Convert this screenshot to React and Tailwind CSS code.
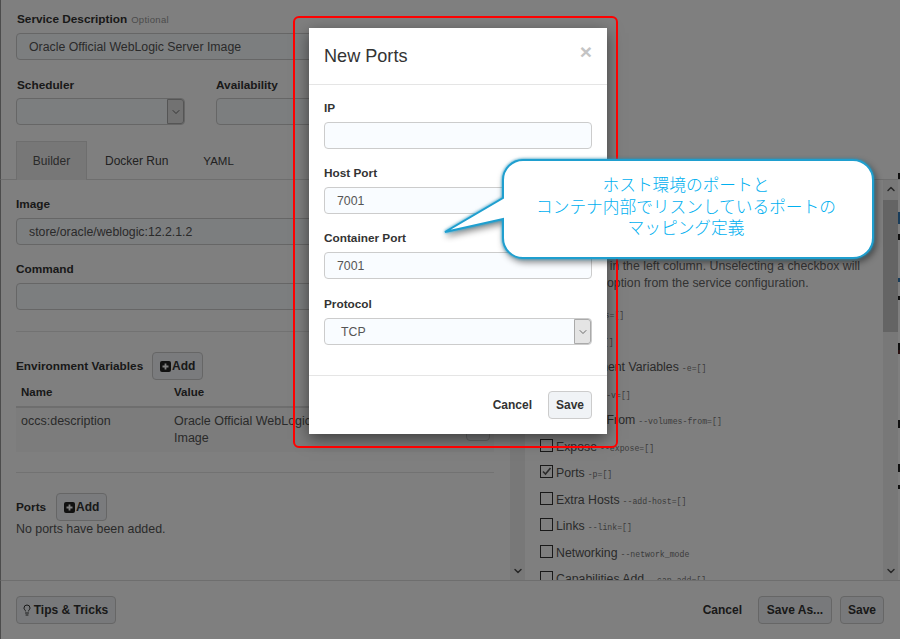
import React from 'react';
import { ChevronDown, ChevronUp, Lightbulb } from 'lucide-react';

const sans = { fontFamily: '"Liberation Sans", Arial, sans-serif' };

const TextBox = ({ value, className = '' }) => (
  <div className={`h-[27px] border border-[#ccc] rounded-[4px] bg-[#f9fcff] pl-3 text-[12.3px] leading-[26px] text-[#555] ${className}`}>
    {value}
  </div>
);

const SelectBox = ({ value, className = '' }) => (
  <div className={`h-[27px] border border-[#ccc] rounded-[4px] bg-[#f9fcff] flex justify-between text-[12.3px] leading-[26px] text-[#555] ${className}`}>
    <span className="pl-4">{value}</span>
    <span className="w-[17px] bg-[#e4e4e4] border border-[#aaa] rounded-r-[3px] flex items-center justify-center">
      <ChevronDown size={12} strokeWidth={1.5} color="#444" />
    </span>
  </div>
);

const AddButton = () => (
  <span className="h-[28px] w-[51px] border border-[#ccc] rounded-[4px] bg-[#f4f7fa] flex items-center justify-center gap-px text-[12px] font-bold text-[#333]">
    <svg width="11" height="11" viewBox="0 0 11 11">
      <rect width="11" height="11" rx="2" fill="#222" />
      <path d="M5.5 2.5v6M2.5 5.5h6" stroke="#fff" strokeWidth="1.8" />
    </svg>
    Add
  </span>
);

const options = [
  ['DNS', '--dns=[]', false],
  ['Label', '-l=[]', false],
  ['Environment Variables', '-e=[]', false],
  ['Volumes', '-v=[]', false],
  ['Volumes From', '--volumes-from=[]', false],
  ['Expose', '--expose=[]', false],
  ['Ports', '-p=[]', true],
  ['Extra Hosts', '--add-host=[]', false],
  ['Links', '--link=[]', false],
  ['Networking', '--network_mode', false],
  ['Capabilities Add', '--cap-add=[]', false],
];

// slivers of the next panel, cut off by the window edge
const edgeMarks = [
  [173, 6, '#222'],
  [212, 12, '#337ab7'],
  [234, 6, '#222'],
  [278, 4, '#337ab7'],
  [296, 4, '#222'],
  [343, 8, '#222'],
  [350, 4, '#522'],
  [420, 8, '#222'],
  [464, 8, '#222'],
  [485, 4, '#222'],
];

const OptionRow = ({ label, flag, checked }) => (
  <div className="h-[26.5px] shrink-0 flex items-start gap-[3px] text-[12.3px] leading-[18px] text-[#555]">
    <span className="w-[13px] h-[13px] mt-px border border-[#333] bg-white flex items-center justify-center">
      {checked && (
        <svg width="11" height="11" viewBox="0 0 11 11">
          <path d="M2 5.5l2.5 2.5L9.5 2" fill="none" stroke="#555" strokeWidth="1.6" />
        </svg>
      )}
    </span>
    <span>{label}</span>
    <span className="pt-[2px] text-[8.2px] text-[#777]" style={{ fontFamily: '"Liberation Mono", monospace' }}>{flag}</span>
  </div>
);

const ScrollTrack = () => (
  <div className="w-[15px] h-full bg-[#f1f1f1] flex flex-col items-center justify-between py-[3px]">
    <ChevronUp size={12} strokeWidth={3} color="#505050" />
    <ChevronDown size={12} strokeWidth={3} color="#505050" />
  </div>
);

const Label = ({ children, className = '' }) => (
  <div className={`text-[11.8px] font-bold leading-[16px] text-[#333] ${className}`}>{children}</div>
);

const Modal = () => (
  <div className="absolute left-[309px] top-[28px] w-[298px] h-[406px] bg-white flex flex-col shadow-[0_5px_15px_rgba(0,0,0,0.5)]">
    <div className="h-[57px] shrink-0 border-b border-[#e5e5e5] px-[15px] pt-[2px] flex items-center justify-between">
      <span className="text-[18.1px] text-[#333]">New Ports</span>
      <span className="text-[21px] font-bold text-[#c4c4c4] -mt-[10px]">×</span>
    </div>
    <div className="flex-1 px-[15px] pt-[15px]">
      <Label className="mb-[6px]">IP</Label>
      <TextBox value="" />
      <Label className="mt-[16px] mb-[6px]">Host Port</Label>
      <TextBox value="7001" />
      <Label className="mt-[16px] mb-[6px]">Container Port</Label>
      <TextBox value="7001" />
      <Label className="mt-[17px] mb-[6px]">Protocol</Label>
      <SelectBox value="TCP" />
    </div>
    <div className="h-[59px] shrink-0 border-t border-[#e5e5e5] px-[15px] flex items-center justify-end gap-4 text-[12px] font-bold text-[#333]">
      <span>Cancel</span>
      <span className="h-[28px] w-[44px] border border-[#ccc] rounded-[4px] bg-[#f0f3f6] flex items-center justify-center">Save</span>
    </div>
  </div>
);

const Callout = () => (
  <div className="absolute left-[440px] top-[155px] w-[450px] h-[115px]">
    <svg width="450" height="115" viewBox="0 0 450 115" className="absolute inset-0">
      <path
        d="M83 5H413a20 20 0 0 1 20 20V83a20 20 0 0 1-20 20H83a20 20 0 0 1-20-20V64L5 77 63 43V25a20 20 0 0 1 20-20Z"
        fill="#fff"
        stroke="#1f9fcf"
        strokeWidth="2"
        style={{ filter: 'drop-shadow(0 0 1.5px #1f9fcf) drop-shadow(2px 3px 3px rgba(0,0,0,0.45))' }}
      />
    </svg>
    <div
      className="absolute left-[60px] top-[19px] w-[372px] text-center text-[16.7px] leading-[21.5px] font-light text-[#00b0f0]"
      style={{ fontFamily: '"Noto Sans CJK JP", sans-serif' }}
    >
      ホスト環境のポートと
      <br />
      コンテナ内部でリスンしているポートの
      <br />
      マッピング定義
    </div>
  </div>
);

export default function App() {
  return (
    <div className="relative w-[900px] h-[639px] overflow-hidden bg-white flex flex-col" style={sans}>
      <div className="h-[180px] shrink-0 border-l border-[#999] border-b-[#ddd] border-b flex flex-col pl-[15px]">
        <div className="pt-[11px] pl-px flex items-baseline gap-1">
          <Label>Service Description</Label>
          <span className="text-[9.5px] text-[#999] tracking-[0.3px]">Optional</span>
        </div>
        <TextBox value="Oracle Official WebLogic Server Image" className="mt-[6px] w-[460px]" />
        <div className="mt-[17px] flex gap-[31px]">
          <div className="w-[169px]">
            <Label className="mb-[5px] pl-px">Scheduler</Label>
            <SelectBox value="" />
          </div>
          <div className="w-[240px]">
            <Label className="mb-[5px]">Availability</Label>
            <TextBox value="" />
          </div>
        </div>
        <div className="mt-[16px] flex text-[12px] leading-[38px] text-[#555]">
          <span className="w-[71px] h-[39px] text-center bg-[#eee] border border-[#ddd] border-b-0">Builder</span>
          <span className="ml-[18px] pt-px text-[#444]">Docker Run</span>
          <span className="ml-[35px] pt-px text-[11.5px] text-[#444]">YAML</span>
        </div>
      </div>

      <div className="h-[400px] shrink-0 flex border-l border-[#999]">
        <div className="w-[509px] shrink-0 pl-[15px] pr-[16px]">
          <Label className="mt-[16px] mb-[6px]">Image</Label>
          <TextBox value="store/oracle/weblogic:12.2.1.2" />
          <Label className="mt-[16px] mb-[6px]">Command</Label>
          <TextBox value="" />
          <div className="mt-[21px] border-t border-[#e5e5e5]" />
          <div className="mt-[20px] flex items-center gap-[9px]">
            <Label>Environment Variables</Label>
            <AddButton />
          </div>
          <div className="mt-[4px] border-b-2 border-[#ddd] h-[24px] flex text-[11.5px] font-bold text-[#333] leading-[16px]">
            <span className="w-[158px] pl-[5px]">Name</span>
            <span>Value</span>
          </div>
          <div className="h-[44px] bg-[#f9f9f9] flex text-[12.5px] leading-[17px] text-[#555] pt-[5px] pr-[4px]">
            <span className="w-[158px] pl-[5px]">occs:description</span>
            <span className="w-[205px]">Oracle Official WebLogic Server Image</span>
            <span className="ml-auto w-[24px] h-[28px] border border-[#ccc] rounded-[4px] bg-[#f0f3f6]" />
          </div>
          <div className="mt-[20px] border-t border-[#e5e5e5]" />
          <div className="mt-[20px] flex items-center gap-[10px]">
            <Label>Ports</Label>
            <AddButton />
          </div>
          <div className="text-[12.4px] leading-[16px] text-[#555]">No ports have been added.</div>
        </div>
        <ScrollTrack />
        <div className="flex-1 min-w-0 h-full overflow-hidden pl-[15px] pt-[78px] flex flex-col">
          <div className="text-[12.3px] leading-[17px] text-[#666] whitespace-nowrap">
            <div>Select fields in the left column. Unselecting a checkbox will</div>
            <div>remove this option from the service configuration.</div>
          </div>
          <div className="mt-[13px] flex flex-col">
            {options.map(([label, flag, checked]) => (
              <OptionRow key={label} label={label} flag={flag} checked={checked} />
            ))}
          </div>
        </div>
        <div className="relative w-[15px] h-full shrink-0">
          <ScrollTrack />
          <div className="absolute left-0 top-[20px] w-[15px] h-[132px] bg-[#c8c8c8]" />
        </div>
        <div className="w-[2px] shrink-0" />
      </div>

      <div className="flex-1 border-t border-[#ddd] border-l-[#999] border-l px-[15px] flex items-center justify-between text-[12px] font-bold text-[#333]">
        <span className="h-[28px] w-[100px] border border-[#ccc] rounded-[4px] bg-[#f0f3f6] flex items-center justify-center gap-px pr-[3px]">
          <Lightbulb size={12} strokeWidth={2} />
          Tips &amp; Tricks
        </span>
        <div className="flex items-center gap-[8px] pr-px">
          <span className="mr-[8px]">Cancel</span>
          <span className="h-[28px] w-[74px] border border-[#ccc] rounded-[4px] bg-[#f0f3f6] flex items-center justify-center">Save As...</span>
          <span className="h-[28px] w-[44px] border border-[#ccc] rounded-[4px] bg-[#f0f3f6] flex items-center justify-center">Save</span>
        </div>
      </div>

      {edgeMarks.map(([top, height, color]) => (
        <div key={top} className="absolute left-[898px] w-[2px]" style={{ top, height, backgroundColor: color }} />
      ))}

      <div className="absolute inset-0 bg-black/50" />
      <Modal />
      <div className="absolute left-[293px] top-[16px] w-[325px] h-[432px] border-[2.5px] border-[#f00] rounded-[6px]" />
      <Callout />
    </div>
  );
}
